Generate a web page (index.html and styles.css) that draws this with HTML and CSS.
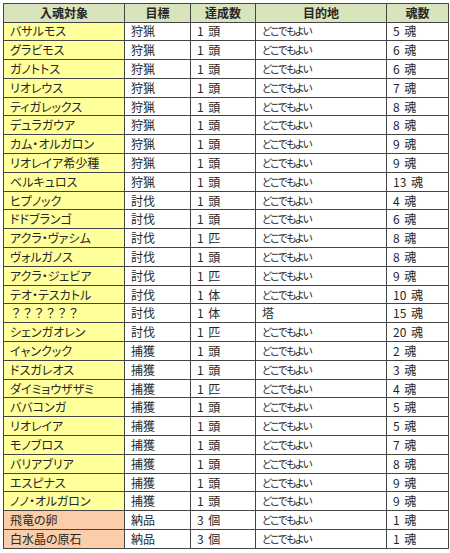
FILE: index.html
```html
<!DOCTYPE html>
<html lang="ja">
<head>
<meta charset="utf-8">
<link rel="stylesheet" href="styles.css">
</head>
<body>
<table class="soul-table">
  <colgroup>
    <col class="c-target"><col class="c-goal"><col class="c-count"><col class="c-place"><col class="c-soul">
  </colgroup>
  <thead>
    <tr><th>入魂対象</th><th>目標</th><th>達成数</th><th>目的地</th><th>魂数</th></tr>
  </thead>
  <tbody>
    <tr><td class="name">バサルモス</td><td>狩猟</td><td>1 頭</td><td class="place">どこでもよい</td><td>5 魂</td></tr>
    <tr><td class="name">グラビモス</td><td>狩猟</td><td>1 頭</td><td class="place">どこでもよい</td><td>6 魂</td></tr>
    <tr><td class="name">ガノトトス</td><td>狩猟</td><td>1 頭</td><td class="place">どこでもよい</td><td>6 魂</td></tr>
    <tr><td class="name">リオレウス</td><td>狩猟</td><td>1 頭</td><td class="place">どこでもよい</td><td>7 魂</td></tr>
    <tr><td class="name">ティガレックス</td><td>狩猟</td><td>1 頭</td><td class="place">どこでもよい</td><td>8 魂</td></tr>
    <tr><td class="name">デュラガウア</td><td>狩猟</td><td>1 頭</td><td class="place">どこでもよい</td><td>8 魂</td></tr>
    <tr><td class="name">カム・オルガロン</td><td>狩猟</td><td>1 頭</td><td class="place">どこでもよい</td><td>9 魂</td></tr>
    <tr><td class="name">リオレイア希少種</td><td>狩猟</td><td>1 頭</td><td class="place">どこでもよい</td><td>9 魂</td></tr>
    <tr><td class="name">ベルキュロス</td><td>狩猟</td><td>1 頭</td><td class="place">どこでもよい</td><td>13 魂</td></tr>
    <tr><td class="name">ヒプノック</td><td>討伐</td><td>1 頭</td><td class="place">どこでもよい</td><td>4 魂</td></tr>
    <tr><td class="name">ドドブランゴ</td><td>討伐</td><td>1 頭</td><td class="place">どこでもよい</td><td>6 魂</td></tr>
    <tr><td class="name">アクラ・ヴァシム</td><td>討伐</td><td>1 匹</td><td class="place">どこでもよい</td><td>8 魂</td></tr>
    <tr><td class="name">ヴォルガノス</td><td>討伐</td><td>1 頭</td><td class="place">どこでもよい</td><td>8 魂</td></tr>
    <tr><td class="name">アクラ・ジェビア</td><td>討伐</td><td>1 匹</td><td class="place">どこでもよい</td><td>9 魂</td></tr>
    <tr><td class="name">テオ・テスカトル</td><td>討伐</td><td>1 体</td><td class="place">どこでもよい</td><td>10 魂</td></tr>
    <tr><td class="name wide">？？？？？？</td><td>討伐</td><td>1 体</td><td>塔</td><td>15 魂</td></tr>
    <tr><td class="name">シェンガオレン</td><td>討伐</td><td>1 匹</td><td class="place">どこでもよい</td><td>20 魂</td></tr>
    <tr><td class="name">イャンクック</td><td>捕獲</td><td>1 頭</td><td class="place">どこでもよい</td><td>2 魂</td></tr>
    <tr><td class="name">ドスガレオス</td><td>捕獲</td><td>1 頭</td><td class="place">どこでもよい</td><td>3 魂</td></tr>
    <tr><td class="name">ダイミョウザザミ</td><td>捕獲</td><td>1 匹</td><td class="place">どこでもよい</td><td>4 魂</td></tr>
    <tr><td class="name">ババコンガ</td><td>捕獲</td><td>1 頭</td><td class="place">どこでもよい</td><td>5 魂</td></tr>
    <tr><td class="name">リオレイア</td><td>捕獲</td><td>1 頭</td><td class="place">どこでもよい</td><td>5 魂</td></tr>
    <tr><td class="name">モノブロス</td><td>捕獲</td><td>1 頭</td><td class="place">どこでもよい</td><td>7 魂</td></tr>
    <tr><td class="name">バリアブリア</td><td>捕獲</td><td>1 頭</td><td class="place">どこでもよい</td><td>8 魂</td></tr>
    <tr><td class="name">エスピナス</td><td>捕獲</td><td>1 頭</td><td class="place">どこでもよい</td><td>9 魂</td></tr>
    <tr><td class="name">ノノ・オルガロン</td><td>捕獲</td><td>1 頭</td><td class="place">どこでもよい</td><td>9 魂</td></tr>
    <tr><td class="name item">飛竜の卵</td><td>納品</td><td>3 個</td><td class="place">どこでもよい</td><td>1 魂</td></tr>
    <tr><td class="name item">白水晶の原石</td><td>納品</td><td>3 個</td><td class="place">どこでもよい</td><td>1 魂</td></tr>
  </tbody>
</table>
</body>
</html>
```

FILE: styles.css
```css
html, body {
  margin: 0;
  padding: 0;
  background: #ffffff;
}

body {
  padding: 3px;
  font-family: "Noto Sans CJK JP", "Noto Sans", sans-serif;
  font-size: 12px;
  color: #262626;
  font-feature-settings: "palt";
}

.soul-table {
  border-collapse: collapse;
  table-layout: fixed;
  width: 445px;
  border: 1px solid #444444;
}

.c-target { width: 121px; }
.c-goal { width: 66px; }
.c-count { width: 65px; }
.c-place { width: 131px; }
.c-soul { width: 62px; }

.soul-table th,
.soul-table td {
  border: 1px solid #444444;
  height: 17.8px;
  padding: 0 0 0 6px;
  line-height: 14px;
  white-space: nowrap;
  overflow: hidden;
  vertical-align: middle;
}

.soul-table th {
  background: #d8e4bc;
  font-weight: bold;
  text-align: center;
  padding: 0;
  height: 17.5px;
}

.soul-table td {
  text-align: left;
  background: #ffffff;
  word-spacing: 2px;
}

.soul-table td.name {
  background: #ffff9c;
  word-spacing: 0;
}

.soul-table td.name.item {
  background: #fbcda8;
}

.soul-table td.wide {
  font-feature-settings: normal;
  letter-spacing: -0.5px;
}

.soul-table td.place {
  font-size: 10.5px;
  letter-spacing: -1.3px;
}
```
